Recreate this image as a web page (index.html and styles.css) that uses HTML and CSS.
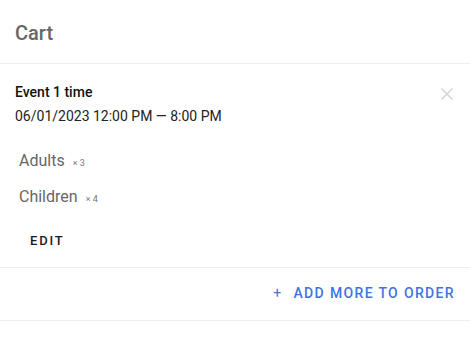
FILE: index.html
```html
<!DOCTYPE html>
<html>
<head>
<meta charset="utf-8">
<link rel="stylesheet" href="styles.css">
</head>
<body>
<div class="cart">
  <header class="cart-header">Cart</header>
  <section class="item">
    <div class="item-head">
      <div>
        <div class="item-title">Event 1 time</div>
        <div class="item-date">06/01/2023 12:00 PM — 8:00 PM</div>
      </div>
      <button class="close" aria-label="Remove">
        <svg width="12" height="12" viewBox="0 0 12 12"><path d="M0.5 0.5 L11.5 11.5 M11.5 0.5 L0.5 11.5" stroke="#d4d4d4" stroke-width="1.5" fill="none"/></svg>
      </button>
    </div>
    <ul class="tickets">
      <li><span class="t-name">Adults</span><span class="t-qty">× 3</span></li>
      <li><span class="t-name">Children</span><span class="t-qty">× 4</span></li>
    </ul>
    <button class="edit">EDIT</button>
  </section>
  <div class="more">
    <button class="add"><span class="plus">+</span>ADD MORE TO ORDER</button>
  </div>
</div>
</body>
</html>
```
FILE: styles.css
```css
html, body {
  margin: 0;
  padding: 0;
  background: #fff;
}
body {
  font-family: Roboto, "Noto Sans", sans-serif;
}
.cart {
  width: 470px;
}
.cart-header {
  height: 64px;
  box-sizing: border-box;
  padding: 21px 15px 0;
  font-size: 20px;
  line-height: 24px;
  font-weight: 500;
  color: #666;
  border-bottom: 1px solid #eeeeee;
}
.item {
  padding: 16px 15px 16px;
  border-bottom: 1px solid #eeeeee;
}
.item-head {
  display: flex;
  justify-content: space-between;
  align-items: flex-start;
}
.item-title {
  font-size: 14px;
  line-height: 24px;
  font-weight: 500;
  color: #111;
}
.item-date {
  font-size: 14px;
  line-height: 24px;
  color: #222;
}
.close {
  border: 0;
  background: none;
  padding: 0;
  margin: 8px 2px 0 0;
  width: 12px;
  height: 12px;
  display: block;
}
.close svg { display: block; }
.tickets {
  list-style: none;
  margin: 23px 0 0;
  padding: 0 0 0 4px;
  display: flex;
  flex-direction: column;
  gap: 14px;
}
.tickets li {
  display: flex;
  align-items: baseline;
  line-height: 20px;
}
.t-name {
  font-size: 16px;
  color: #666;
}
.t-qty {
  font-size: 9px;
  color: #777;
  margin-left: 8px;
}
.edit {
  display: block;
  margin: 22px 0 0 15px;
  padding: 0;
  border: 0;
  background: none;
  font-family: inherit;
  font-size: 13px;
  line-height: 20px;
  font-weight: 500;
  letter-spacing: 1.8px;
  color: #1a1a1a;
}
.more {
  display: flex;
  justify-content: flex-end;
  padding: 15px 15px 17px;
  border-bottom: 1px solid #eeeeee;
}
.add {
  padding: 0;
  border: 0;
  background: none;
  font-family: inherit;
  font-size: 14px;
  line-height: 20px;
  font-weight: 500;
  letter-spacing: 1.35px;
  color: #3f74e0;
  margin-right: 0;
}
.plus {
  font-weight: 400;
  margin-right: 11px;
}
```
